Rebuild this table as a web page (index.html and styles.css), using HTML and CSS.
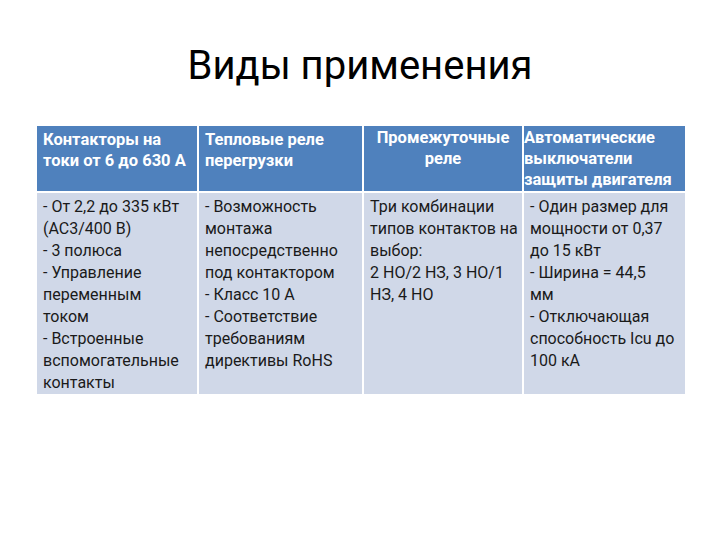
FILE: index.html
```html
<!DOCTYPE html>
<html lang="ru">
<head>
<meta charset="utf-8">
<title>Виды применения</title>
<link rel="stylesheet" href="styles.css">
</head>
<body>
<div class="slide">
  <h1 class="title">Виды применения</h1>
  <table class="grid">
    <colgroup>
      <col class="c1"><col class="c2"><col class="c3"><col class="c4">
    </colgroup>
    <tr class="head">
      <td class="pad">Контакторы на<br>токи от 6 до 630 А</td>
      <td class="pad">Тепловые реле<br>перегрузки</td>
      <td class="center">Промежуточные<br>реле</td>
      <td class="tight">Автоматические<br>выключатели<br>защиты двигателя</td>
    </tr>
    <tr class="body">
      <td class="pad">- От 2,2 до 335 кВт<br>(АС3/400 В)<br>- 3 полюса<br>- Управление<br>переменным<br>током<br>- Встроенные<br>вспомогательные<br>контакты</td>
      <td class="pad">- Возможность<br>монтажа<br>непосредственно<br>под контактором<br>- Класс 10 А<br>- Соответствие<br>требованиям<br>директивы RoHS</td>
      <td class="pad">Три комбинации<br>типов контактов на<br>выбор:<br>2 НО/2 НЗ, 3 НО/1<br>НЗ, 4 НО</td>
      <td class="pad">- Один размер для<br>мощности от 0,37<br>до 15 кВт<br>- Ширина = 44,5<br>мм<br>- Отключающая<br>способность Icu до<br>100 кА</td>
    </tr>
  </table>
</div>
</body>
</html>
```
FILE: styles.css
```css
html, body {
  margin: 0;
  padding: 0;
  background: #ffffff;
}
.slide {
  width: 720px;
  height: 540px;
  background: #ffffff;
  overflow: hidden;
  padding-top: 42px;
  box-sizing: border-box;
}
.title {
  margin: 0;
  height: 82px;
  font-family: Roboto, "Liberation Sans", sans-serif;
  font-weight: 400;
  font-size: 40px;
  line-height: 48px;
  text-align: center;
  color: #000000;
}
.grid {
  margin-left: 35px;
  width: 650px;
  border-collapse: collapse;
  table-layout: fixed;
  font-family: Roboto, "Liberation Sans", sans-serif;
  font-size: 16px;
  line-height: 22px;
}
.c1 { width: 162px; }
.c2 { width: 165px; }
.c3 { width: 160px; }
.c4 { width: 163px; }
.grid td {
  vertical-align: top;
  white-space: nowrap;
  border: 2px solid #ffffff;
  box-sizing: border-box;
}
.head td {
  background: #4f81bd;
  color: #ffffff;
  font-weight: 700;
  font-size: 16.5px;
  line-height: 21px;
  padding-top: 3px;
  padding-bottom: 1px;
}
.body td {
  background: #d0d8e8;
  color: #1a1a1a;
  padding-top: 3px;
  padding-bottom: 0;
}
.pad { padding-left: 6px; }
.head .center { text-align: center; padding-top: 1px; }
.head .tight { padding-left: 0; padding-top: 1px; }
```
